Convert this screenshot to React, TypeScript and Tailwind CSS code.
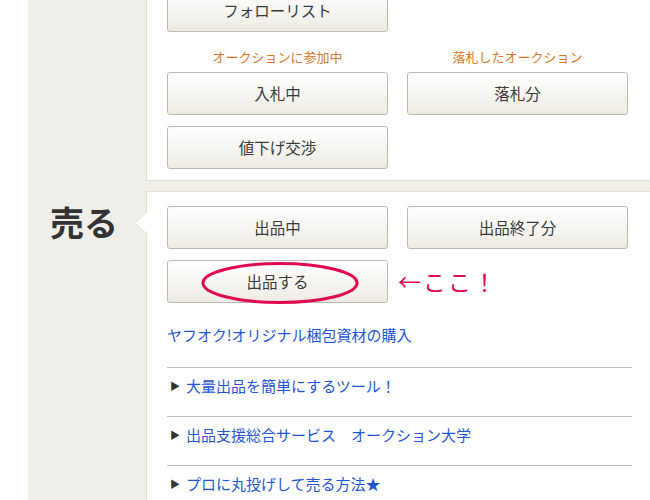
const font = { fontFamily: '"Noto Sans CJK JP", "Noto Sans", sans-serif' }

function Btn({ label }: { label: string }) {
  return (
    <div className="flex h-[43px] w-[221px] items-center justify-center rounded-[3px] border border-[#bcbcb6] bg-gradient-to-b from-[#ffffff] to-[#edebe3] text-[15.5px] text-[#3a3a3a]">
      {label}
    </div>
  )
}

const links = ["大量出品を簡単にするツール！", "出品支援総合サービス　オークション大学", "プロに丸投げして売る方法★"]

export default function App() {
  return (
    <div className="flex h-[500px] w-[650px] overflow-hidden bg-white" style={font}>
      <div className="w-[28px] shrink-0" />
      <div className="flex flex-1 flex-col bg-[#f0eee8] pr-[3px]">
        {/* 入札・落札 */}
        <div className="flex">
          <div className="w-[118px] shrink-0" />
          <div className="flex-1 border-x border-b border-[#e2dfd5] bg-white px-[20px] pb-[11px]">
            <div className="-mt-[11px] grid grid-cols-[221px_221px] gap-x-[19px]">
              <Btn label="フォローリスト" />
              <div />
              <div className="mt-[17px] mb-[7px] text-center text-[13px] leading-[16px] text-[#d9772a]">オークションに参加中</div>
              <div className="mt-[17px] mb-[7px] text-center text-[13px] leading-[16px] text-[#d9772a]">落札したオークション</div>
              <Btn label="入札中" />
              <Btn label="落札分" />
              <div className="mt-[11px]">
                <Btn label="値下げ交渉" />
              </div>
            </div>
          </div>
        </div>

        {/* 売る */}
        <div className="mt-[10px] flex flex-1">
          <div className="flex w-[118px] shrink-0 justify-end pr-[28px] pt-[11px]">
            <span className="text-[34px] font-bold leading-[40px] text-[#333]">売る</span>
          </div>
          <div className="relative flex-1 border border-[#e2dfd5] bg-white px-[20px] pt-[14px]">
            <svg className="absolute -left-[12px] top-[20px]" width="13" height="22" viewBox="0 0 13 22">
              <path d="M12 0 L0 11 L12 22" fill="#fff" stroke="#e2dfd5" strokeWidth="1" />
              <rect x="12" y="0" width="1" height="22" fill="#fff" />
            </svg>
            <div className="grid grid-cols-[221px_221px] gap-x-[19px] gap-y-[11px]">
              <Btn label="出品中" />
              <Btn label="出品終了分" />
              <div className="relative">
                <Btn label="出品する" />
                <svg className="absolute left-[34px] top-[1px]" width="158" height="44" viewBox="0 0 158 44">
                  <ellipse cx="79" cy="22" rx="77" ry="19.5" fill="none" stroke="#e0084f" strokeWidth="3" />
                </svg>
              </div>
              <div className="flex items-center text-[23px] leading-none text-[#e0084f]">
                <span className="-ml-[9px] tracking-[2px]">←ここ！</span>
              </div>
            </div>
            <div className="mt-[22px] text-[15px] leading-[20px] text-[#1f55d6]">ヤフオク!オリジナル梱包資材の購入</div>
            <div className="mt-[22px] w-[465px]">
              {links.map((t) => (
                <div key={t} className="flex h-[49px] items-start border-t border-[#bdbdbd] pt-[8px] text-[15px] leading-[20px]">
                  <span className="ml-[3px] mr-[6px] text-[10px] text-[#333]">▶</span>
                  <span className="text-[#1f55d6]">{t}</span>
                </div>
              ))}
            </div>
          </div>
        </div>
      </div>
    </div>
  )
}
